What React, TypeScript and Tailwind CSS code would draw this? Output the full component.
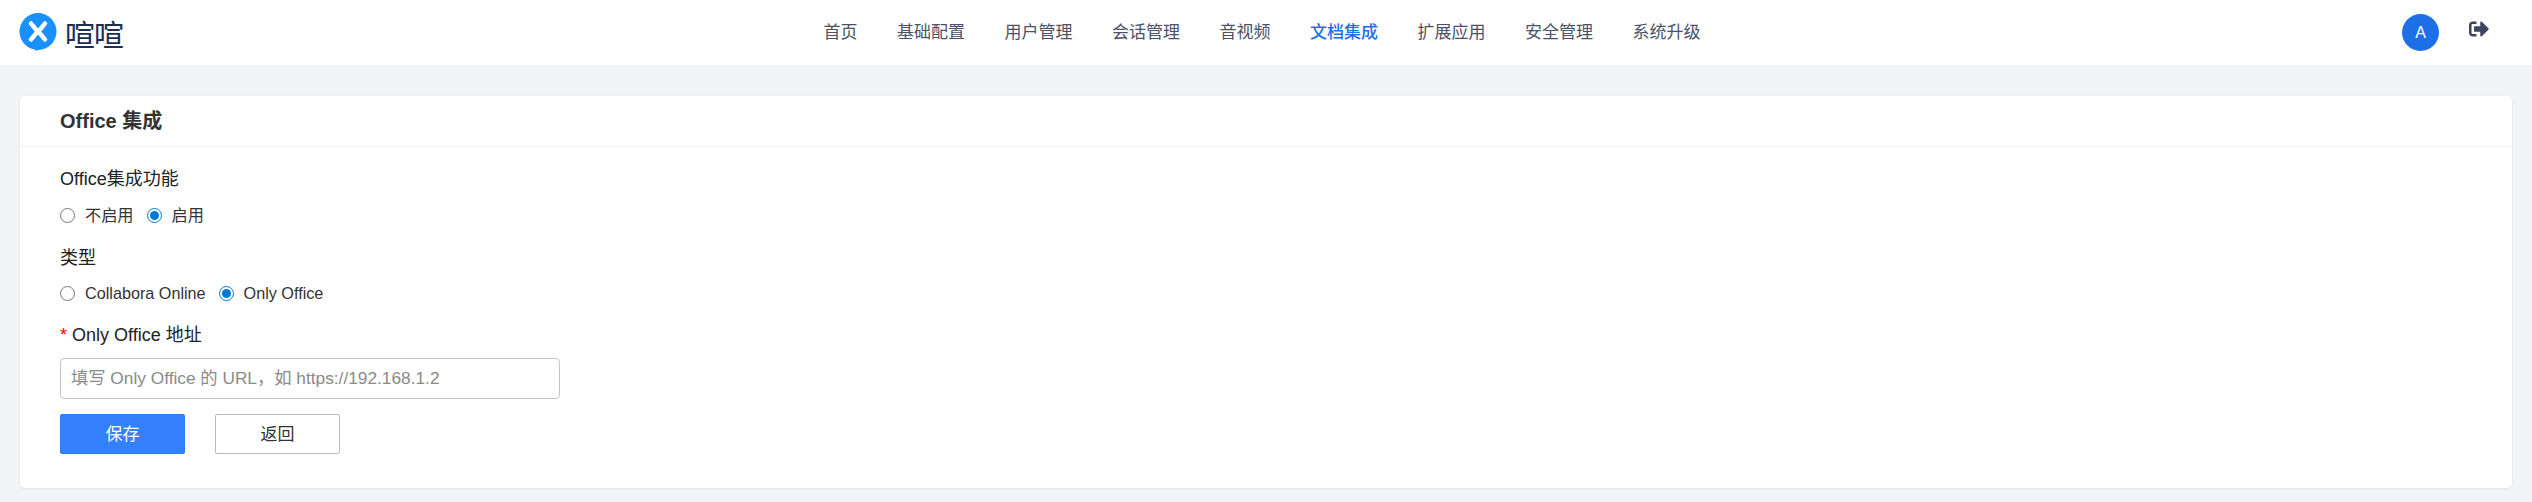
import { FaSignOutAlt } from "react-icons/fa";

const navItems = ["首页", "基础配置", "用户管理", "会话管理", "音视频", "文档集成", "扩展应用", "安全管理", "系统升级"];

const font = "font-['Liberation_Sans','Noto_Sans_CJK_SC',sans-serif]";

const Logo = () => (
  <div className="flex w-[804.500px] shrink-0 items-center">
    <svg width="38" height="38" viewBox="0 0 38 38" className="mt-[-1px] shrink-0">
      <circle cx="19" cy="18.500" r="18.500" fill="#1890ff" />
      <path d="M12 30l5 8 4-2z" fill="#1890ff" />
      <path d="M12 10.500c3 3 4 5.500 7 8s4 5 7 8M26 10.500c-3 3-4 5.500-7 8s-4 5-7 8" stroke="#fff" strokeWidth="4.500" strokeLinecap="round" fill="none" />
    </svg>
    <span className="ml-[8px] text-[30px] leading-none tracking-[-1px] text-[#1b2f52] font-['Noto_Sans_CJK_SC',sans-serif]">喧喧</span>
  </div>
);

const Radio = ({ label, checked }: { label: string; checked?: boolean }) => (
  <label className="flex items-center">
    <input type="radio" readOnly checked={!!checked} className="m-0 h-[15px] w-[15px] accent-[#0078d4]" />
    <span className="ml-[10px] text-[16.200px] leading-none text-[#333]">{label}</span>
  </label>
);

export default function App() {
  return (
    <div className={`h-[502px] w-[2532px] overflow-hidden bg-[#f3f4f6] ${font}`}>
      <header className="flex h-[65px] items-center bg-white pl-[19px] pr-[43px]">
        <Logo />
        <nav className="flex gap-[39.500px] text-[17px] text-[#4b5168]">
          {navItems.map((item) => (
            <a key={item} className={item === "文档集成" ? "font-medium text-[#1d6fe8]" : ""}>
              {item}
            </a>
          ))}
        </nav>
        <div className="ml-auto flex items-center gap-[30px]">
          <div className="flex h-[37px] w-[37px] items-center justify-center rounded-full bg-[#1d6fe8] text-[16px] text-white">
            A
          </div>
          <FaSignOutAlt className="mb-[7px] text-[20px] text-[#3d4461]" />
        </div>
      </header>
      <main className="mx-[20px] mt-[31px] h-[392px] rounded-[5px] bg-white shadow-[0_1px_3px_rgba(0,0,0,0.08)]">
        <div className="flex h-[51px] items-center border-b border-[#f0f1f3] pl-[40px] text-[20px] font-bold text-[#333]">
          Office 集成
        </div>
        <form className="pl-[40px]">
          <div className="mt-[20px] text-[18px] leading-[24px] text-[#222]">Office集成功能</div>
          <div className="mt-[16px] flex gap-[13px]">
            <Radio label="不启用" />
            <Radio label="启用" checked />
          </div>
          <div className="mt-[23px] text-[18px] leading-[24px] text-[#222]">类型</div>
          <div className="mt-[15px] flex gap-[13px]">
            <Radio label="Collabora Online" />
            <Radio label="Only Office" checked />
          </div>
          <div className="mt-[22px] text-[18px] leading-[24px] text-[#222]">
            <span className="text-[#f00]">*</span> Only Office 地址
          </div>
          <input
            placeholder="填写 Only Office 的 URL，如 https://192.168.1.2"
            className="mt-[11px] block h-[41px] w-[500px] rounded-[4px] border border-[#c4c4c4] px-[10px] text-[17.300px] placeholder:text-[#8a8a8a]"
          />
          <div className="mt-[15px] flex gap-[30px]">
            <button type="button" className="h-[40px] w-[125px] rounded-[2px] border border-[#2e7cf6] bg-[#3480ff] text-[17px] text-white">
              保存
            </button>
            <button type="button" className="h-[40px] w-[125px] rounded-[2px] border border-[#bbb] bg-white text-[17px] text-[#333]">
              返回
            </button>
          </div>
        </form>
      </main>
    </div>
  );
}
